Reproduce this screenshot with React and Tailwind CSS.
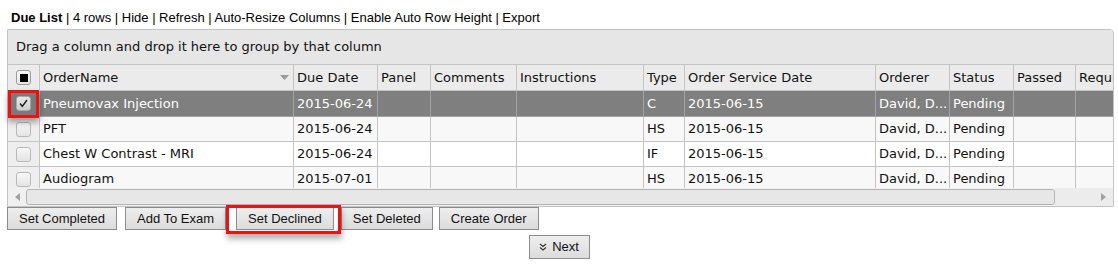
import React from "react";

const cols = [
  { key: "cb", w: "w-[32px]" },
  { key: "name", label: "OrderName", w: "w-[254px]", sort: true },
  { key: "due", label: "Due Date", w: "w-[84px]" },
  { key: "panel", label: "Panel", w: "w-[53px]" },
  { key: "comments", label: "Comments", w: "w-[86px]" },
  { key: "instr", label: "Instructions", w: "w-[127px]" },
  { key: "type", label: "Type", w: "w-[41px]" },
  { key: "osd", label: "Order Service Date", w: "w-[191px]" },
  { key: "orderer", label: "Orderer", w: "w-[74px]" },
  { key: "status", label: "Status", w: "w-[64px]" },
  { key: "passed", label: "Passed", w: "w-[62px]" },
  { key: "requ", label: "Required", w: "w-[120px]" },
];

const rows = [
  { name: "Pneumovax Injection", due: "2015-06-24", type: "C", osd: "2015-06-15", orderer: "David, D...", status: "Pending", selected: true },
  { name: "PFT", due: "2015-06-24", type: "HS", osd: "2015-06-15", orderer: "David, D...", status: "Pending" },
  { name: "Chest W Contrast - MRI", due: "2015-06-24", type: "IF", osd: "2015-06-15", orderer: "David, D...", status: "Pending" },
  { name: "Audiogram", due: "2015-07-01", type: "HS", osd: "2015-06-15", orderer: "David, D...", status: "Pending" },
];

function Btn({ children }) {
  return (
    <button className="h-[23px] px-[11px] border border-[#8c8c8c] bg-gradient-to-b from-[#eeeeee] to-[#dcdcdc] text-[13px] leading-[21px] text-[#111] font-['Liberation_Sans',Arial,sans-serif] whitespace-nowrap">
      {children}
    </button>
  );
}

function Checkbox({ state }) {
  if (state === "header") {
    return (
      <div className="w-[15px] h-[15px] rounded-[3px] border border-[#9a9a9a] bg-gradient-to-b from-[#fafafa] to-[#e6e6e6] flex items-center justify-center">
        <div className="w-[8px] h-[8px] bg-black" />
      </div>
    );
  }
  if (state === "checked") {
    return (
      <div className="w-[15px] h-[15px] rounded-[3px] border border-[#a8a8a8] bg-gradient-to-b from-[#e8e8e8] to-[#cfcfcf] flex items-center justify-center">
        <svg width="11" height="11" viewBox="0 0 11 11">
          <path d="M2 5.5 L4.3 8.3 L9 2" fill="none" stroke="#1a1a1a" strokeWidth="1.4" />
        </svg>
      </div>
    );
  }
  return <div className="w-[15px] h-[15px] rounded-[3px] border border-[#b8b8b8] bg-gradient-to-b from-[#f8f8f8] to-[#e4e4e4]" />;
}

export default function App() {
  return (
    <div className="relative w-[1118px] h-[265px] bg-white overflow-hidden">
      <div className="h-[29px] pt-[10px] pl-[11px] text-[13px] leading-[15px] text-black font-['Liberation_Sans',Arial,sans-serif] whitespace-nowrap">
        <span className="font-bold">Due List</span> | 4 rows | Hide | Refresh | Auto-Resize Columns | Enable Auto Row Height | Export
      </div>

      <div className="ml-[7px] w-[1107px] h-[178px] border border-[#c4c4c4] rounded-tr-[4px] overflow-hidden bg-[#f0f0f0] flex flex-col font-['DejaVu_Sans',Verdana,sans-serif] text-[13px] text-[#111]">
        <div className="h-[35px] shrink-0 bg-[#e6e6e6] border-b border-[#c4c4c4] flex items-center pl-[8px]">
          Drag a column and drop it here to group by that column
        </div>
        <div className="h-[123px] shrink-0 overflow-hidden bg-white">
          <div className="w-[1300px]">
            <div className="flex h-[26px] bg-[#ebebeb] border-b border-[#c4c4c4]">
              {cols.map((c) => (
                <div key={c.key} className={`${c.w} shrink-0 border-r border-[#c4c4c4] flex items-center ${c.key === "cb" ? "justify-center" : "pl-[3px] pr-[4px] justify-between"}`}>
                  {c.key === "cb" ? (
                    <Checkbox state="header" />
                  ) : (
                    <>
                      <span className="whitespace-nowrap">{c.label}</span>
                      {c.sort && (
                        <svg width="9" height="5" viewBox="0 0 9 5">
                          <path d="M0 0 L9 0 L4.5 5 Z" fill="#9a9a9a" />
                        </svg>
                      )}
                    </>
                  )}
                </div>
              ))}
            </div>
            {rows.map((r, i) => {
              const bg = r.selected ? "bg-[#7f7f7f] text-white" : i % 2 === 1 ? "bg-[#f8f8f8]" : "bg-white";
              const bc = r.selected ? "border-[#a3a3a3]" : "border-[#c4c4c4]";
              return (
                <div key={i} className={`flex ${r.selected ? "h-[26px]" : "h-[25px]"} border-b ${bc} ${bg}`}>
                  {cols.map((c) => (
                    <div
                      key={c.key}
                      className={`${c.w} shrink-0 border-r ${bc} flex items-center whitespace-nowrap overflow-hidden ${
                        c.key === "cb" ? `justify-center ${r.selected ? "bg-[#7a7a7a]" : "bg-[#eeeeee]"}` : "pl-[3px]"
                      }`}
                    >
                      {c.key === "cb" ? <Checkbox state={r.selected ? "checked" : "none"} /> : r[c.key] || ""}
                    </div>
                  ))}
                </div>
              );
            })}
          </div>
        </div>
        <div className="h-[18px] shrink-0 bg-[#f0f0f0] flex items-center">
          <div className="w-[18px] flex justify-center">
            <svg width="5" height="8" viewBox="0 0 5 8">
              <path d="M5 0 L0 4 L5 8 Z" fill="#a0a0a0" />
            </svg>
          </div>
          <div className="w-[1029px] h-[16px] rounded-[3px] border border-[#b4b4b4] bg-[#e7e7e7]" />
          <div className="flex-1 h-full bg-[#ececec] flex items-center justify-end pr-[7px]">
            <svg width="5" height="8" viewBox="0 0 5 8">
              <path d="M0 0 L5 4 L0 8 Z" fill="#a0a0a0" />
            </svg>
          </div>
        </div>
      </div>

      <div className="flex pl-[7px] h-[23px]">
        <Btn>Set Completed</Btn>
        <div className="w-[8px]" />
        <Btn>Add To Exam</Btn>
        <div className="w-[10px]" />
        <Btn>Set Declined</Btn>
        <div className="w-[7px]" />
        <Btn>Set Deleted</Btn>
        <div className="w-[6px]" />
        <Btn>Create Order</Btn>
      </div>

      <div className="flex justify-center mt-[5px]">
        <button className="h-[24px] w-[61px] border border-[#8c8c8c] bg-gradient-to-b from-[#eeeeee] to-[#dcdcdc] text-[13px] text-[#111] font-['Liberation_Sans',Arial,sans-serif] flex items-center justify-center gap-[5px]">
          <svg width="8" height="8" viewBox="0 0 8 8">
            <path d="M1 1 L4 3.5 L7 1 M1 4.5 L4 7 L7 4.5" fill="none" stroke="#333" strokeWidth="1.1" />
          </svg>
          <span>Next</span>
        </button>
      </div>

      <div className="absolute left-[8px] top-[90px] w-[31px] h-[28px] border-[3px] border-[#ee1111] shadow-[0_4px_6px_rgba(0,0,0,0.35)]" />
      <div className="absolute left-[226px] top-[205px] w-[115px] h-[29px] border-[3px] border-[#ee1111] shadow-[1px_5px_6px_rgba(0,0,0,0.3)]" />
    </div>
  );
}
